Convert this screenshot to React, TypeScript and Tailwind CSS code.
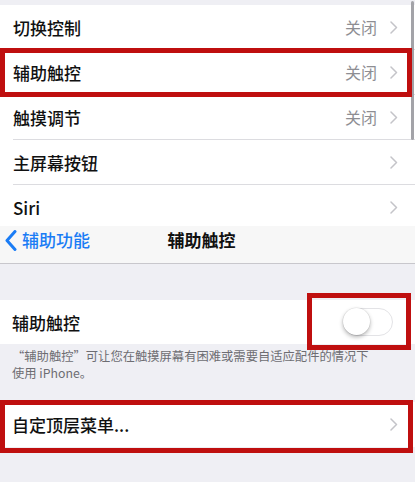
import React from "react";

const FONT = { fontFamily: '"Noto Sans CJK SC", "Noto Sans", sans-serif' };

function Chevron({ color = "#c4c4c9" }: { color?: string }) {
  return (
    <svg width="8" height="13" viewBox="0 0 8 13" fill="none">
      <path d="M1 1l5.5 5.5L1 12" stroke={color} strokeWidth="1.5" strokeLinecap="round" strokeLinejoin="round" />
    </svg>
  );
}

function Row({ label, value, last }: { label: string; value?: string; last?: boolean }) {
  return (
    <div className="h-[45px] bg-white flex items-stretch pl-[13px]">
      <div className={`flex-1 flex items-center pr-[17px] ${last ? "" : "border-b border-[#dcdce0]"}`}>
        <span className="flex-1 text-[17px] font-medium text-[#111] leading-none">{label}</span>
        {value && <span className="text-[16px] text-[#8e8e93] mr-[13px] leading-none">{value}</span>}
        <Chevron />
      </div>
    </div>
  );
}

function Box({ className }: { className: string }) {
  return <div className={`absolute border-[5px] border-[#bf0f0f] pointer-events-none ${className}`} />;
}

export default function App() {
  return (
    <div className="relative w-[415px] h-[482px] overflow-hidden bg-[#efeff4]" style={FONT}>
      {/* top screenshot */}
      <div className="h-[226px] overflow-hidden bg-[#efeff4]">
        <div className="h-[5px]" />
        <Row label="切换控制" value="关闭" />
        <Row label="辅助触控" value="关闭" />
        <Row label="触摸调节" value="关闭" />
        <Row label="主屏幕按钮" />
        <Row label="Siri" last />
      </div>

      {/* nav bar */}
      <div className="h-[38px] bg-[#f7f7f7] border-b border-[#c8c7cc] relative flex items-start pt-[3px]">
        <div className="flex items-center pl-[5px] h-[22px]">
          <svg width="12" height="21" viewBox="0 0 12 21" fill="none">
            <path d="M10 1.5L2 10.5l8 9" stroke="#1a7cf5" strokeWidth="3" strokeLinecap="round" strokeLinejoin="round" />
          </svg>
          <span className="ml-[5px] text-[17px] font-medium text-[#1a7cf5] leading-[22px]">辅助功能</span>
        </div>
        <div className="absolute left-0 right-0 top-[3px] flex justify-center pr-[12px]">
          <span className="text-[17px] font-bold text-[#111] leading-[22px]">辅助触控</span>
        </div>
      </div>

      <div className="h-[36px]" />

      <div className="h-[44px] bg-white flex items-center pl-[12px] pr-[22px]">
        <span className="flex-1 text-[17px] font-medium text-[#111] leading-none">辅助触控</span>
        <div className="relative w-[50px] h-[28px] rounded-full border-[1.5px] border-[#e3e3e6] bg-white">
          <div className="absolute left-[-1px] top-[-1px] w-[27px] h-[27px] rounded-full bg-white shadow-[0_2px_4px_rgba(0,0,0,0.3),0_0_0_0.5px_rgba(0,0,0,0.08)]" />
        </div>
      </div>

      <div className="px-[12px] pt-[4px] text-[12.3px] text-[#6d6d72] flex flex-col">
        <div className="h-[17px] leading-[17px]">“辅助触控”可让您在触摸屏幕有困难或需要自适应配件的情况下</div>
        <div className="h-[17px] leading-[17px]">使用 iPhone。</div>
      </div>

      <div className="h-[20px]" />

      <div className="h-[45px] bg-white flex items-center pl-[12px] pr-[17px]">
        <span className="flex-1 text-[17px] font-medium text-[#111] leading-none">自定顶层菜单...</span>
        <Chevron />
      </div>

      {/* scrollbar */}
      <div className="absolute left-[411px] top-[1px] w-[2.5px] h-[139px] rounded-full bg-[#a3a3a8]" />

      {/* annotations */}
      <Box className="left-0 top-[48px] w-[412px] h-[49px]" />
      <Box className="left-[307px] top-[293px] w-[104px] h-[57px]" />
      <Box className="left-0 top-[400px] w-[413px] h-[53px]" />
    </div>
  );
}
